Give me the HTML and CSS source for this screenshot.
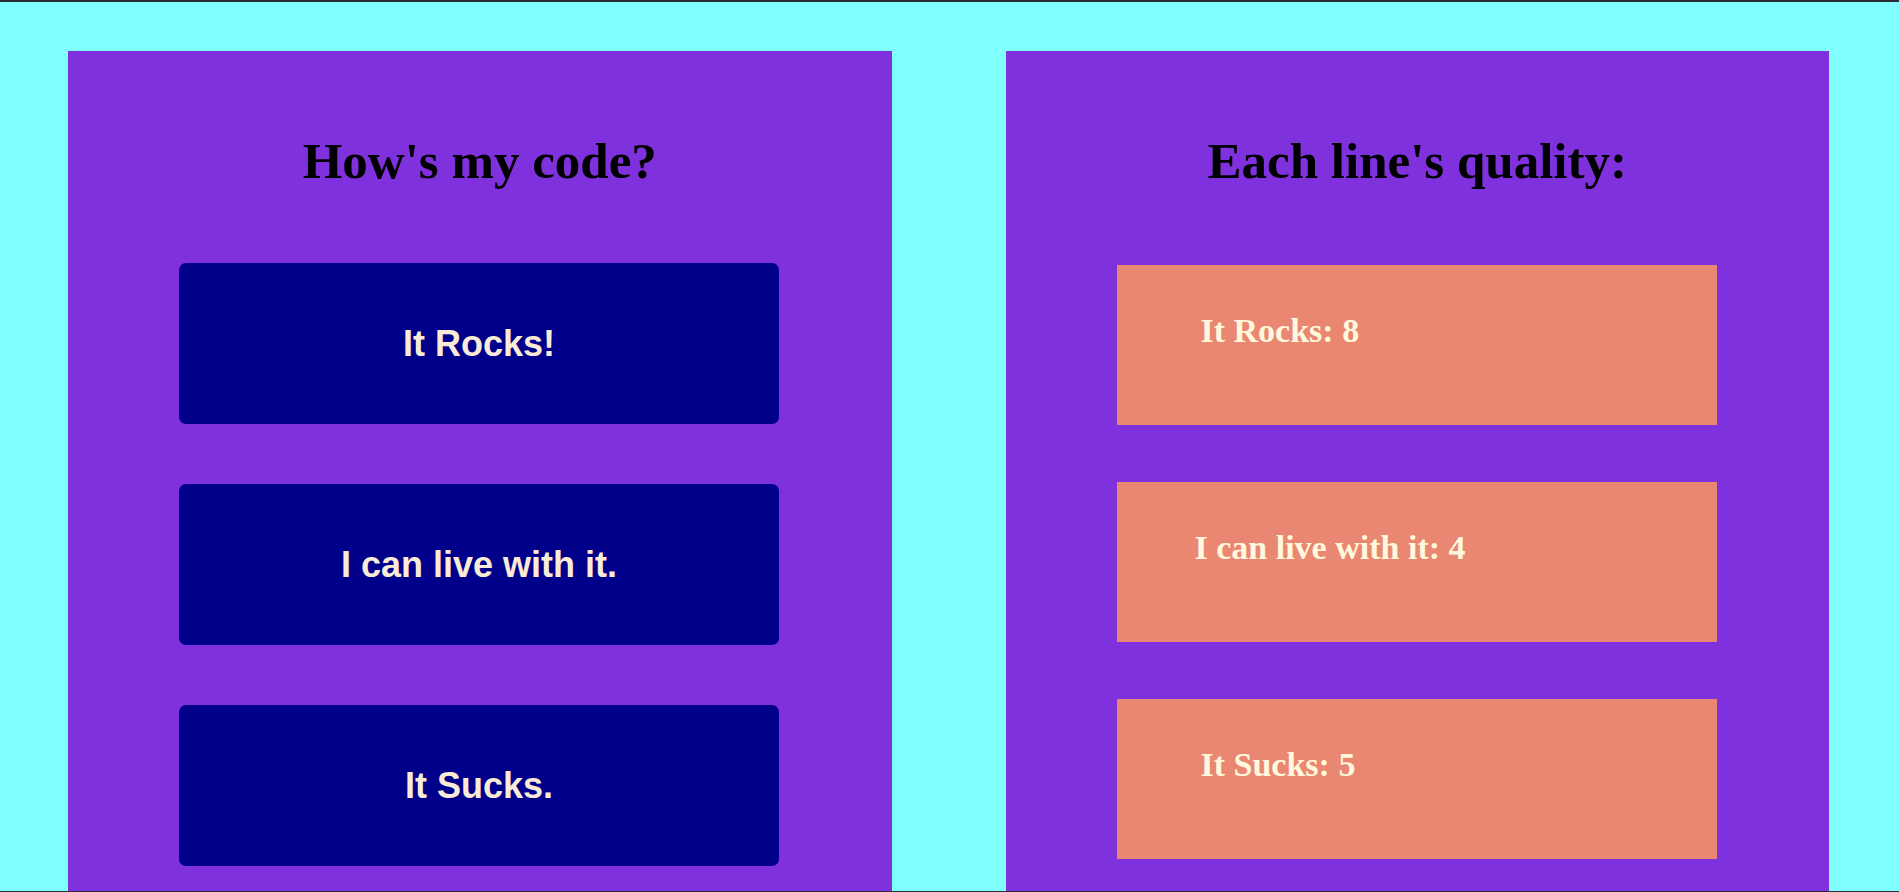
FILE: index.html
```html
<!DOCTYPE html>
<html lang="en">
<head>
<meta charset="utf-8">
<title>How's my code?</title>
<link rel="stylesheet" href="styles.css">
</head>
<body>
<main class="page">
  <section class="panel">
    <h1 class="panel-title">How's my code?</h1>
    <div class="vote-list">
      <button class="vote-btn" type="button">It Rocks!</button>
      <button class="vote-btn" type="button">I can live with it.</button>
      <button class="vote-btn" type="button">It Sucks.</button>
    </div>
  </section>
  <section class="panel">
    <h1 class="panel-title">Each line's quality:</h1>
    <div class="result-list">
      <div class="result"><p class="result-text">It Rocks: 8</p></div>
      <div class="result"><p class="result-text result-text--wide">I can live with it: 4</p></div>
      <div class="result"><p class="result-text">It Sucks: 5</p></div>
    </div>
  </section>
</main>
</body>
</html>
```

FILE: styles.css
```css
html, body {
  margin: 0;
  padding: 0;
  height: 100%;
}

body {
  box-sizing: border-box;
  background: #7fffff;
  border-top: 2px solid #2b2c33;
  border-bottom: 1px solid #2b2c33;
  overflow: hidden;
  font-family: "Liberation Serif", "Times New Roman", serif;
}

.page {
  display: flex;
  gap: 114px;
  height: 100%;
  padding: 49px 70px 0 68px;
  box-sizing: border-box;
}

.panel {
  flex: 1 1 0;
  background: #8031de;
  padding-top: 81px;
  box-sizing: border-box;
}

.panel-title {
  margin: 0;
  font-family: "Liberation Serif", "Times New Roman", serif;
  font-weight: bold;
  font-size: 51px;
  line-height: 58px;
  color: #000;
  text-align: center;
}

.vote-list {
  display: flex;
  flex-direction: column;
  gap: 60px;
  margin: 73px 0 0 111px;
  width: 600px;
}

.vote-btn {
  display: flex;
  align-items: center;
  justify-content: center;
  height: 161px;
  width: 100%;
  border: none;
  border-radius: 7px;
  background: #00008b;
  color: #faebd7;
  font-family: "Liberation Sans", Arial, sans-serif;
  font-weight: bold;
  font-size: 36px;
  padding: 0;
  cursor: pointer;
}

.result-list {
  display: flex;
  flex-direction: column;
  gap: 57px;
  margin: 75px 0 0 111px;
  width: 600px;
}

.result {
  height: 160px;
  background: #ea8772;
  box-sizing: border-box;
  padding: 46px 0 0 84px;
}

.result-text {
  margin: 0;
  font-family: "Liberation Serif", "Times New Roman", serif;
  font-weight: bold;
  font-size: 34px;
  line-height: 40px;
  color: #fff8dc;
}

.result-text--wide {
  margin-left: -6px;
}
```
